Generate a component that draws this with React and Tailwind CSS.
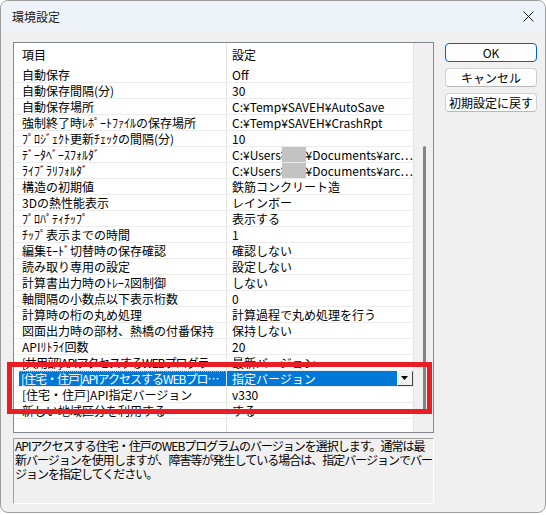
const rows = [
    ['自動保存', 'Off'],
    ['自動保存間隔(分)', '30'],
    ['自動保存場所', 'C:¥Temp¥SAVEH¥AutoSave'],
    ['強制終了時ﾚﾎﾟｰﾄﾌｧｲﾙの保存場所', 'C:¥Temp¥SAVEH¥CrashRpt'],
    ['ﾌﾟﾛｼﾞｪｸﾄ更新ﾁｪｯｸの間隔(分)', '10'],
    ['ﾃﾞｰﾀﾍﾞｰｽﾌｫﾙﾀﾞ', 'path'],
    ['ﾗｲﾌﾞﾗﾘﾌｫﾙﾀﾞ', 'path'],
    ['構造の初期値', '鉄筋コンクリート造'],
    ['3Dの熱性能表示', 'レインボー'],
    ['ﾌﾟﾛﾊﾟﾃｨﾁｯﾌﾟ', '表示する'],
    ['ﾁｯﾌﾟ表示までの時間', '1'],
    ['編集ﾓｰﾄﾞ切替時の保存確認', '確認しない'],
    ['読み取り専用の設定', '設定しない'],
    ['計算書出力時のﾄﾚｰｽ図制御', 'しない'],
    ['軸間隔の小数点以下表示桁数', '0'],
    ['計算時の桁の丸め処理', '計算過程で丸め処理を行う'],
    ['図面出力時の部材、熱橋の付番保持', '保持しない'],
    ['APIﾘﾄﾗｲ回数', '20'],
    ['[共用部]APIアクセスするWEBプログラ…', '最新バージョン'],
    ['[住宅・住戸]APIアクセスするWEBプロ…', '指定バージョン'],
    ['[住宅・住戸]API指定バージョン', 'v330'],
    ['新しい地域区分を利用する', 'する'],
    ['', ''],
];

const SELECTED = 19;

function PathValue() {
    return (
        <span className="flex items-center whitespace-nowrap">
            C:¥Users¥
            <span className="inline-block w-[31px] h-[15px] bg-[#c3c3c3] -ml-[5px]" />
            ¥Documents¥arc…
        </span>
    );
}

function Row({ label, value, index }) {
    const selected = index === SELECTED;
    // long labels are squeezed a little so they fit the column like the original
    const squeeze = label.length > 20 ? 'tracking-[-1px]' : '';
    if (selected) {
        return (
            <div className="flex h-[16px] leading-[16px] border-b border-[#ececec]">
                <div className="w-[213px] pl-[5px] border-r border-[#e3e3e3]">
                    <div className={`h-full bg-[#0078d7] text-white pl-[2px] border-t border-dotted border-[#f4a460] leading-[14px] whitespace-nowrap overflow-hidden ${squeeze}`}>
                        {label}
                    </div>
                </div>
                <div className="flex-1 flex bg-[#0078d7] text-white">
                    <div className="flex-1 pl-[5px] whitespace-nowrap">{value}</div>
                    <div className="w-[16px] h-[15px] bg-[#f0f0f0] border border-t-white border-l-white border-r-[#404040] border-b-[#404040] flex items-center justify-center">
                        <svg width="8" height="5" viewBox="0 0 8 5">
                            <path d="M0 0 H7 L3.5 4 Z" fill="#000" />
                        </svg>
                    </div>
                </div>
            </div>
        );
    }
    return (
        <div className="flex h-[16px] leading-[15px] border-b border-[#ececec] text-black">
            <div className={`w-[213px] pl-[8px] border-r border-[#e3e3e3] whitespace-nowrap overflow-hidden ${squeeze}`}>{label}</div>
            <div className="flex-1 pl-[5px] whitespace-nowrap overflow-hidden">
                {value === 'path' ? <PathValue /> : value}
            </div>
        </div>
    );
}

function DialogButton({ children, primary }) {
    return (
        <button
            className={`w-[92px] h-[19px] rounded-[4px] bg-[#fdfdfd] text-[12px] leading-[17px] text-black border ${primary ? 'border-[#0067c0]' : 'border-[#d0d0d0] border-b-[#b8b8b8]'}`}
        >
            {children}
        </button>
    );
}

export default function App() {
    return (
        <div className="w-[546px] h-[515px] bg-white font-['Noto_Sans_CJK_JP','Noto_Sans',sans-serif] text-[12px] text-black">
            <div className="relative w-[546px] h-[513px] flex flex-col rounded-[8px] border border-[#9e9e9e] overflow-hidden bg-[#f0f0f0]">
                <div className="h-[31px] flex-none flex items-center justify-between pl-[11px] pr-[10px] bg-[#eef2f9]">
                    <span className="text-[12px] text-[#1a1a1a]">環境設定</span>
                    <svg width="11" height="11" viewBox="0 0 11 11" className="mr-[1px]">
                        <path d="M0.5 0.5 L10.5 10.5 M10.5 0.5 L0.5 10.5" stroke="#1a1a1a" strokeWidth="1" />
                    </svg>
                </div>

                <div className="flex-1 flex pl-[12px] pt-[10px]">
                    <div className="w-[421px] flex flex-col gap-[5px]">
                        <div className="h-[391px] flex border border-[#828790] bg-white">
                            <div className="w-[400px] border-r border-[#e3e3e3] overflow-hidden">
                                <div className="flex h-[24px] items-center">
                                    <div className="w-[213px] h-full pl-[8px] flex items-center border-r border-[#e3e3e3]">項目</div>
                                    <div className="flex-1 pl-[5px]">設定</div>
                                </div>
                                {rows.map(([label, value], i) => (
                                    <Row key={i} label={label} value={value} index={i} />
                                ))}
                            </div>
                            <div className="flex-1 bg-[#f0f0f0] flex flex-col items-center">
                                <div className="h-[103px]" />
                                <div className="w-[3px] h-[264px] rounded-full bg-[#858585] ml-[1px]" />
                            </div>
                        </div>

                        <div className="h-[66px] bg-[#f0f0f0] border border-t-[#a0a0a0] border-l-[#a0a0a0] border-r-white border-b-white pl-[1px] leading-[14px] tracking-[-1px] whitespace-nowrap">
                            <div>APIアクセスする住宅・住戸のWEBプログラムのバージョンを選択します。通常は最</div>
                            <div>新バージョンを使用しますが、障害等が発生している場合は、指定バージョンでバー</div>
                            <div>ジョンを指定してください。</div>
                        </div>
                    </div>

                    <div className="ml-[11px] flex flex-col gap-[6px] pt-[1px]">
                        <DialogButton primary>OK</DialogButton>
                        <DialogButton>キャンセル</DialogButton>
                        <DialogButton>初期設定に戻す</DialogButton>
                    </div>
                </div>

                <div className="absolute left-[6px] top-[361px] w-[425px] h-[52px] border-[5px] border-[#ea1c24]" />
            </div>
        </div>
    );
}
